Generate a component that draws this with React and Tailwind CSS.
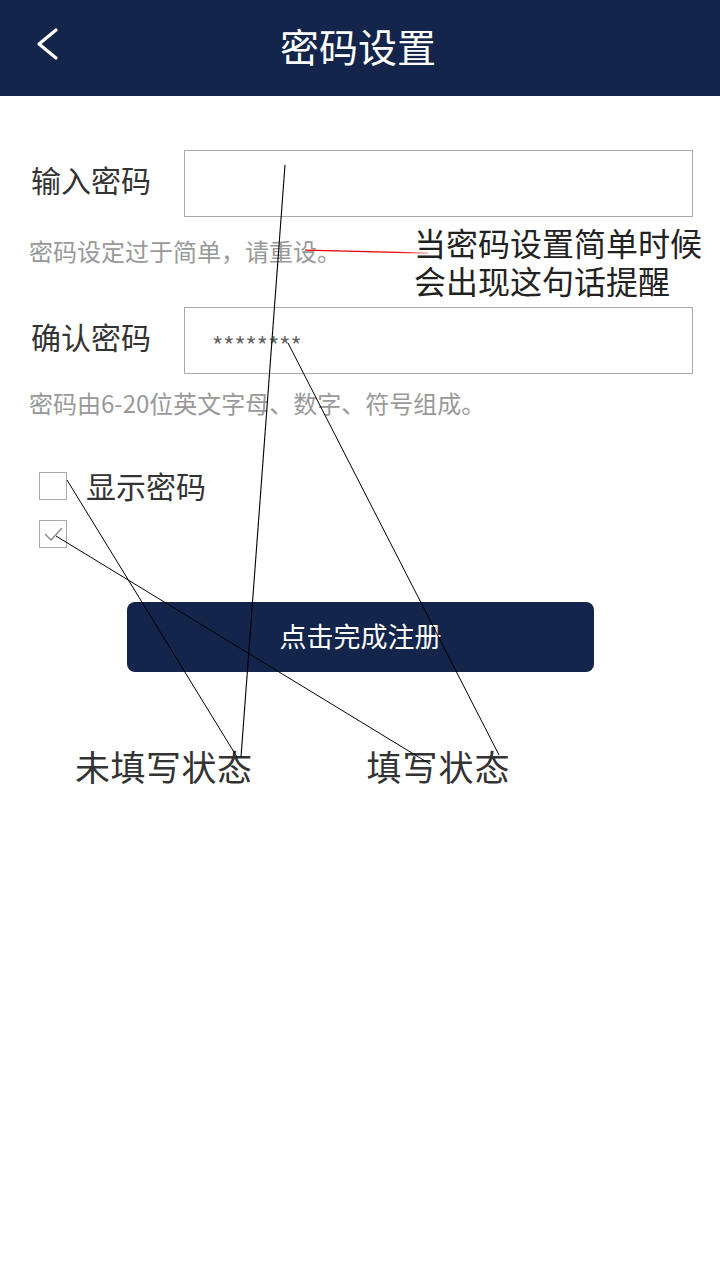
import React from "react";

const font = { fontFamily: '"Noto Sans CJK SC", "Noto Sans", sans-serif' };

export default function App() {
  return (
    <div className="relative w-[720px] h-[1280px] bg-white overflow-hidden" style={font}>
      {/* Header */}
      <div className="relative h-[96px] bg-[#13254a] flex items-center justify-center">
        <svg className="absolute left-[30px] top-[24px]" width="34" height="40" viewBox="0 0 34 40">
          <polyline points="26,6 9,20 26,34" fill="none" stroke="white" strokeWidth="3.2" strokeLinecap="round" strokeLinejoin="round" />
        </svg>
        <h1 className="text-white text-[39px] leading-none ml-[-4px] mt-[-5px]">密码设置</h1>
      </div>

      {/* Content */}
      <div className="flex flex-col">
        <div className="flex items-center mt-[54px]">
          <span className="w-[184px] pl-[31px] text-[30px] leading-none text-[#333] mb-[10px]">输入密码</span>
          <div className="w-[509px] h-[67px] border border-[#aaa]"></div>
        </div>
        <p className="mt-[18px] pl-[29px] text-[24px] leading-[32px] text-[#999]">密码设定过于简单，请重设。</p>

        <div className="flex items-center mt-[40px]">
          <span className="w-[184px] pl-[31px] text-[30px] leading-none text-[#333] mb-[10px]">确认密码</span>
          <div className="w-[509px] h-[67px] border border-[#aaa] flex items-center pl-[27px]">
            <span className="text-[24px] leading-none text-[#666] mt-[8px]">********</span>
          </div>
        </div>
        <p className="mt-[13px] pl-[29px] text-[24px] leading-[32px] text-[#999]">密码由6-20位英文字母、数字、符号组成。</p>

        <div className="flex items-start mt-[53px] pl-[39px]">
          <div className="w-[28px] h-[28px] border border-[#aaa]"></div>
          <span className="ml-[19px] mt-[-2px] text-[30px] leading-none text-[#333]">显示密码</span>
        </div>
        <div className="flex items-center mt-[20px] pl-[39px]">
          <div className="w-[28px] h-[28px] border border-[#aaa] flex items-center justify-center">
            <svg width="22" height="22" viewBox="0 0 22 22">
              <polyline points="3,11 9,17 20,5" fill="none" stroke="#888" strokeWidth="1.4" />
            </svg>
          </div>
        </div>

        <button className="mt-[54px] ml-[127px] w-[467px] h-[70px] rounded-[8px] bg-[#13254a] text-white text-[27px] leading-none pb-[4px]">
          点击完成注册
        </button>

        <div className="flex mt-[76px] text-[35px] leading-none text-[#333]">
          <span className="ml-[75px] tracking-[0.5px]">未填写状态</span>
          <span className="ml-[114px] tracking-[1px]">填写状态</span>
        </div>
      </div>

      {/* Annotation text */}
      <div className="absolute left-[414px] top-[223px] text-[32px] leading-[38px] text-[#222]">
        <div>当密码设置简单时候</div>
        <div>会出现这句话提醒</div>
      </div>

      {/* Annotation lines */}
      <svg className="absolute left-0 top-0 pointer-events-none" width="720" height="1280">
        <defs>
          <linearGradient id="redfade" x1="0" y1="0" x2="1" y2="0">
            <stop offset="0" stopColor="#ee0000" />
            <stop offset="0.75" stopColor="#ee0000" />
            <stop offset="1" stopColor="#f7a0a0" />
          </linearGradient>
        </defs>
        <line x1="285" y1="165" x2="241" y2="757" stroke="#000" strokeWidth="1.1" />
        <line x1="67" y1="480" x2="237" y2="757" stroke="#000" strokeWidth="1" />
        <line x1="56" y1="536" x2="430" y2="764" stroke="#000" strokeWidth="1" />
        <line x1="288" y1="343" x2="499" y2="755" stroke="#000" strokeWidth="1" />
        <rect x="305" y="249.5" width="123" height="1.3" fill="url(#redfade)" transform="rotate(1.4 305 250)" />
      </svg>
    </div>
  );
}
